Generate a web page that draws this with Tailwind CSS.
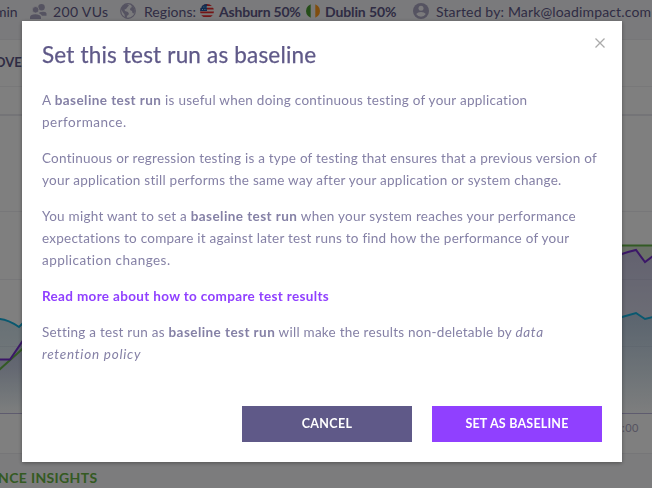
<!DOCTYPE html>
<html lang="en">
<head>
<meta charset="utf-8">
<title>Set this test run as baseline</title>
<script src="https://cdn.jsdelivr.net/npm/@tailwindcss/browser@4"></script>
</head>
<body class="w-[652px] h-[488px] overflow-hidden bg-[#f9f9fa] font-['Lato',sans-serif] text-[#5f5988]">
<div class="flex h-full flex-col">
  <header class="flex h-[39px] shrink-0 items-start whitespace-nowrap bg-[#f5f4f8] pt-[2px] text-[14px] leading-[20px]">
    <span class="ml-[-5px] w-[35px]">min</span>
    <svg class="mt-[2px] h-[15px] w-[17px]" viewBox="0 0 17 15" fill="#aaa6c2"><circle cx="11.5" cy="3.3" r="3.3"/><path d="M9.500 8.200q6-1.200 7 1v2.600h-4.500q-.6-1.700-2.800-2.300z"/><circle cx="5.600" cy="5.800" r="3.300" stroke="#f6f5f9" stroke-width=".8"/><path d="M0 15v-2q.5-2.800 5.300-2.800T11 13v2z"/></svg>
    <span class="ml-[6px] w-[67px] tracking-[0.35px]">200 VUs</span>
    <svg class="mt-[1px] h-[16px] w-[16px]" viewBox="0 0 16 16"><circle cx="8" cy="8" r="7.300" fill="none" stroke="#aaa6c2" stroke-width="1.200"/><path fill="#aaa6c2" d="M1 6q1-4.500 6-5l2 1.500-1.500 1.500-1.500 2-1.500.5.500 1.500 3 1 1 2-2 2-.5 2.500-1.500-1-.5-3-1.500-2zM10.500 1.500l3 2.500 1.500 4-1 2.500-1.500-.5-.5-2-2-1 .5-2 1.500-1z"/></svg>
    <span class="ml-[8px] w-[56px] tracking-[0.05px]">Regions:</span>
    <svg class="mt-[2px] h-[14px] w-[14px]" viewBox="0 0 14 14"><clipPath id="us"><circle cx="7" cy="7" r="7"/></clipPath><g clip-path="url(#us)"><path fill="#f5eeee" d="M0 0h14v14H0z"/><path stroke="#e62a2f" stroke-width="1.800" d="M0 1h14M0 4.700h14M0 8.400h14M0 12.100h14"/><path fill="#1f5ca6" d="M0 0h7v7H0z"/><path stroke="#c8d8ea" stroke-dasharray="1 1.400" d="M1 3h6M2 5.500h5"/></g></svg>
    <span class="ml-[5px] w-[87px] font-bold tracking-[-0.2px]">Ashburn 50%</span>
    <svg class="mt-[2px] h-[14px] w-[14px]" viewBox="0 0 14 14"><clipPath id="ie"><circle cx="7" cy="7" r="7"/></clipPath><g clip-path="url(#ie)"><path fill="#f3f3ee" d="M0 0h14v14H0z"/><path fill="#4a9b32" d="M0 0h4.700v14H0z"/><path fill="#ff9b1c" d="M9.300 0H14v14H9.300z"/></g></svg>
    <span class="ml-[5px] w-[88px] font-bold tracking-[-0.12px]">Dublin 50%</span>
    <svg class="mt-[1px] h-[16px] w-[16px]" viewBox="0 0 16 16"><circle cx="8" cy="8" r="8" fill="#aaa6c2"/><circle cx="8" cy="5.200" r="2.500" fill="#f6f5f9"/><path fill="#f6f5f9" d="M3.200 11q1.500-2 4.800-2t4.800 2Q11 13.800 8 13.800T3.200 11z"/></svg>
    <span class="ml-[7px] tracking-[0.15px]">Started by: Mark@loadimpact.com</span>
  </header>
  <main class="h-[415px] shrink-0 border-y border-[#ececf0] bg-white">
    <div class="flex h-[47px] items-center border-b border-[#f0f0f3] text-[13px] font-bold"><span class="ml-[-5px]">OVE</span></div>
    <svg class="block h-[366px] w-[652px]" viewBox="0 87 652 366">
      <defs><linearGradient id="g" x1="0" y1="0" x2="0" y2="1"><stop stop-color="#8d88c0" stop-opacity=".5"/><stop offset=".45" stop-color="#9297c4" stop-opacity=".35"/><stop offset="1" stop-color="#98bdce" stop-opacity=".02"/></linearGradient>
      <linearGradient id="b" x1="0" y1="0" x2="0" y2="1"><stop stop-color="#86b5cd" stop-opacity=".4"/><stop offset="1" stop-color="#86b5cd" stop-opacity=".02"/></linearGradient></defs>
      <path stroke="#e9e9ee" stroke-width="2" d="M0 115h652"/><path stroke="#efeff2" d="M0 211.500h652M0 279.500h652M0 346.500h652"/>
      <path fill="url(#b)" d="M0 319q9 1 19 8l10-10v96H0z"/><path fill="url(#g)" d="M0 359h10l19-27v81H0z"/>
      <path fill="#d4e2ce" d="M610 245h42v11l-7 6-9-12-12 3-14 4z"/><path fill="url(#g)" d="M610 257l14-4 12-3 9 12 7-6v157h-42z"/><path fill="url(#b)" d="M610 321l26-8 9 6 7-2v96h-42z"/>
      <path stroke="#bcb6dc" d="M0 413.500h652"/>
      <g fill="none" stroke-width="2"><path stroke="#14b1df" d="M-2 319q9 0 21 8l10-10M610 321l12-4 14-4 9 6 8-2"/><path stroke="#67b54a" d="M-2 371l31-28M610 245.500h42"/><path stroke="#772fd0" d="M-2 359.500h12l19-28M610 260l12-6 6-2 8-2 9 12 8-6"/></g>
      <text x="622" y="432" font-size="11" letter-spacing=".4" fill="#aba6c2">:00</text>
    </svg>
  </main>
  <h2 class="mt-[14px] whitespace-nowrap text-[14px] font-bold leading-[20px] tracking-[0.35px] text-[#68b444]"><span class="ml-[-2px]">NCE INSIGHTS</span></h2>
</div>
<div class="fixed inset-0 bg-black/50"></div>
<section class="fixed left-[22px] top-[21px] flex h-[441px] w-[600px] flex-col bg-white px-5 pb-5 pt-[20px] shadow-[0_1px_4px_rgba(0,0,0,.35)]">
  <div class="flex justify-between">
    <h1 class="whitespace-nowrap text-[22.5px] leading-[28px] tracking-[0.18px] [-webkit-text-stroke:0.25px_#5f5988]">Set this test run as baseline</h1>
    <svg class="mr-[-3px] mt-[-3px] h-[10px] w-[10px]" viewBox="0 0 10 10" stroke="#aaa" stroke-width="1.300"><path d="M.5.500l9 9M9.500.500l-9 9"/></svg>
  </div>
  <div class="mt-[20px] flex flex-col gap-[14px] whitespace-nowrap text-[13.5px] leading-[22px] text-[#8581a6]">
    <p><span class="tracking-[0.26px]">A <b class="tracking-[0.44px]">baseline test run</b> is useful when doing continuous testing of your application</span><br><span class="tracking-[0.5px]">performance.</span></p>
    <p><span class="tracking-[0.23px]">Continuous or regression testing is a type of testing that ensures that a previous version of</span><br><span class="tracking-[0.25px]">your application still performs the same way after your application or system change.</span></p>
    <p><span class="tracking-[0.25px]">You might want to set a <b class="tracking-[0.44px]">baseline test run</b> when your system reaches your performance</span><br><span class="tracking-[0.24px]">expectations to compare it against later test runs to find how the performance of your</span><br><span class="tracking-[0.46px]">application changes.</span></p>
    <p class="font-bold tracking-[0.34px] text-[#9040ff]">Read more about how to compare test results</p>
    <p><span class="tracking-[0.25px]">Setting a test run as <b class="tracking-[0.44px]">baseline test run</b> will make the results non-deletable by <i class="tracking-[0.7px]">data</i></span><br><i class="tracking-[0.76px]">retention policy</i></p>
  </div>
  <div class="mt-auto flex justify-end gap-5 text-[12.5px] font-bold text-white">
    <button class="h-9 w-[170px] bg-[#5f5988] tracking-[0.35px]">CANCEL</button>
    <button class="h-9 w-[170px] bg-[#9040ff] tracking-[0.2px]">SET AS BASELINE</button>
  </div>
</section>
</body>
</html>
